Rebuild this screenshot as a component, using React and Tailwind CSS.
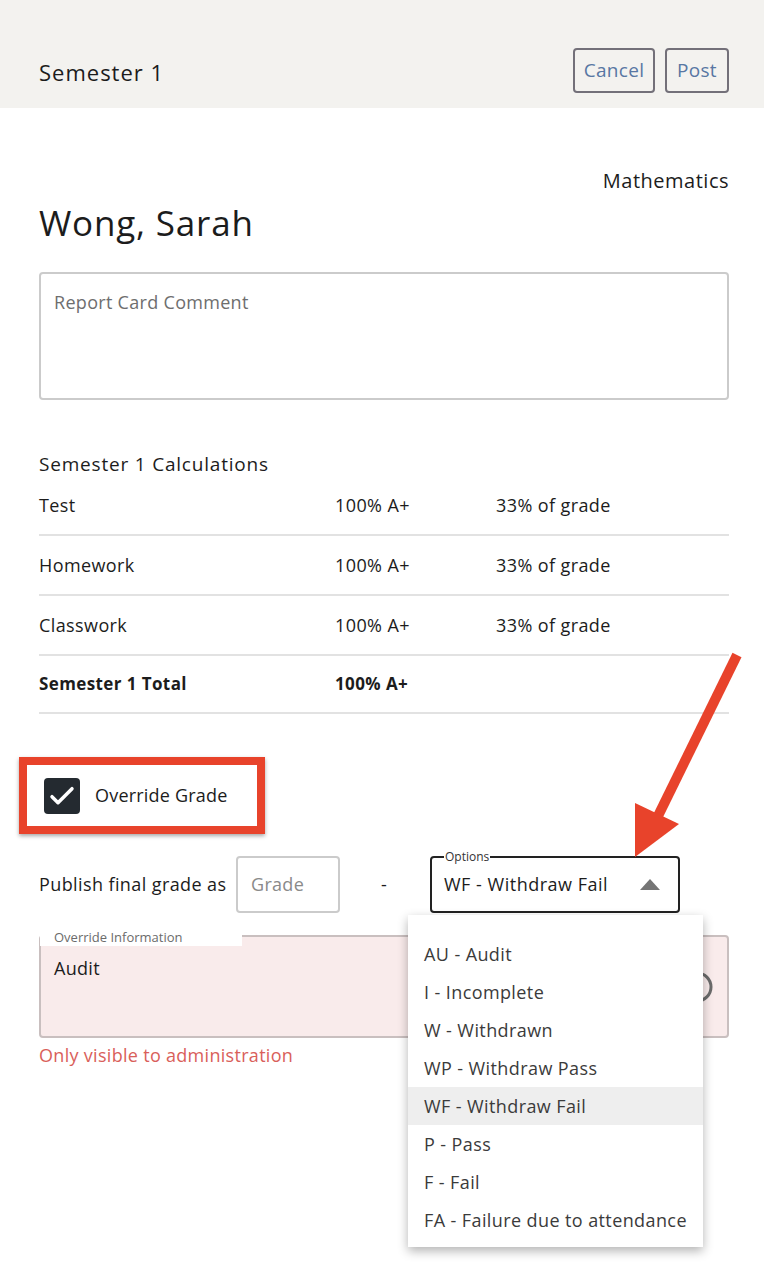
import React from "react";

const font = { fontFamily: "'Open Sans', Lato, sans-serif" };

const rows = [
  { label: "Test", value: "100% A+", pct: "33% of grade" },
  { label: "Homework", value: "100% A+", pct: "33% of grade" },
  { label: "Classwork", value: "100% A+", pct: "33% of grade" },
];

const options = [
  "AU - Audit",
  "I - Incomplete",
  "W - Withdrawn",
  "WP - Withdraw Pass",
  "WF - Withdraw Fail",
  "P - Pass",
  "F - Fail",
  "FA - Failure due to attendance",
];

export default function App() {
  return (
    <div className="relative w-[764px] min-h-[1282px] bg-white text-[#1c1c1c]" style={font}>
      {/* Header */}
      <div className="flex h-[108px] items-start justify-between bg-[#f3f2ef] pl-[39px] pr-[35px] pt-[48px]">
        <div className="mt-[8px] text-[22px] leading-[32px] tracking-[1px] text-[#1c1c1c]">Semester 1</div>
        <div className="flex gap-[10px]">
          <button className="h-[45px] w-[82px] rounded-[4px] border-2 border-[#737079] text-[19px] tracking-[0.3px] text-[#5877a3]">Cancel</button>
          <button className="h-[45px] w-[64px] rounded-[4px] border-2 border-[#737079] text-[19px] tracking-[0.3px] text-[#5877a3]">Post</button>
        </div>
      </div>

      <div className="pl-[39px] pr-[35px]">
        <div className="mt-[61px] text-right text-[20px] leading-[24px] tracking-[0.5px]">Mathematics</div>
        <div className="mt-[10px] text-[35px] leading-[40px] tracking-[0.8px]">Wong, Sarah</div>
        <div className="mt-[29px] h-[128px] rounded-[4px] border-2 border-[#cbcbcb] px-[13px] pt-[16px] text-[18px] leading-[24px] tracking-[0.3px] text-[#6e6e6e]">
          Report Card Comment
        </div>

        <div className="mt-[52px] text-[19px] leading-[24px] tracking-[0.8px]">Semester 1 Calculations</div>
        <div>
          {rows.map((r) => (
            <div key={r.label} className="flex h-[60px] items-center border-b-2 border-[#e2e2e2] text-[18px] tracking-[0.4px]">
              <div className="w-[296px]">{r.label}</div>
              <div className="w-[161px]">{r.value}</div>
              <div>{r.pct}</div>
            </div>
          ))}
          <div className="flex h-[58px] items-center border-b-2 border-[#e2e2e2] text-[17px] font-bold tracking-[0.4px]">
            <div className="w-[296px]">Semester 1 Total</div>
            <div className="w-[161px]">100% A+</div>
          </div>
        </div>

        {/* Override checkbox with red annotation box */}
        <div className="-ml-[20px] mt-[43px] flex h-[77px] w-[246px] items-center gap-[15px] border-[8px] border-[#e8432b] pl-[17px] shadow-[0_2px_4px_rgba(0,0,0,0.35)]">
          <div className="flex h-[36px] w-[36px] items-center justify-center rounded-[4px] bg-[#242a30]">
            <svg width="32" height="32" viewBox="0 0 24 24" fill="none" stroke="white" strokeWidth="2.6" strokeLinecap="round" strokeLinejoin="round">
              <path d="M4.5 12.5l4.5 4.5L19.5 6.5" />
            </svg>
          </div>
          <div className="text-[18px] tracking-[0.2px]">Override Grade</div>
        </div>

        {/* Publish row */}
        <div className="mt-[22px] flex h-[57px] items-center">
          <div className="w-[197px] text-[18px] tracking-[0.4px]">Publish final grade as</div>
          <div className="flex h-[57px] w-[104px] items-center rounded-[4px] border-2 border-[#cbcbcb] pl-[13px] text-[18px] tracking-[0.3px] text-[#8a8a8a]">Grade</div>
          <div className="ml-[41px] w-[49px] text-[18px]">-</div>
          <div className="relative h-[57px] w-[250px] rounded-[4px] border-2 border-[#222222]">
            <span className="absolute -top-[9px] left-[12px] bg-white px-[1px] text-[12px] leading-[16px] text-[#333]">Options</span>
            <div className="flex h-full items-center justify-between pl-[12px] pr-[18px]">
              <span className="text-[18px] tracking-[0.5px]">WF - Withdraw Fail</span>
              <svg width="20" height="11" viewBox="0 0 20 11"><path d="M0 11 L10 0 L20 11 Z" fill="#757575" /></svg>
            </div>
            {/* Dropdown menu */}
            <div className="absolute left-[-24px] top-[57px] z-20 w-[295px] bg-white pb-[8px] pt-[20px] shadow-[0_4px_10px_rgba(0,0,0,0.3)]">
              {options.map((o) => (
                <div key={o} className={`flex h-[38px] items-center pl-[16px] text-[18px] tracking-[0.4px] text-[#3b3b3b] ${o === "WF - Withdraw Fail" ? "bg-[#eeeeee]" : ""}`}>
                  {o}
                </div>
              ))}
            </div>
          </div>
        </div>

        {/* Override information */}
        <div className="relative mt-[22px] h-[103px] rounded-[4px] border-2 border-[#c9bfbf] bg-[#f9ebeb] px-[13px] pt-[18px]">
          <span className="absolute -left-[1px] -top-[9px] h-[18px] w-[202px] bg-white pl-[14px] text-[13px] leading-[18px] text-[#6b6b6b]">Override Information</span>
          <div className="text-[18px] tracking-[0.3px]">Audit</div>
          <svg className="absolute right-[14px] top-[34px]" width="32" height="32" viewBox="0 0 32 32">
            <circle cx="16" cy="16" r="14" fill="none" stroke="#6b6b6b" strokeWidth="3" />
          </svg>
        </div>
        <div className="mt-[4px] text-[18px] tracking-[0.3px] text-[#d9605a]">Only visible to administration</div>
      </div>

      {/* Red arrow annotation */}
      <svg className="pointer-events-none absolute left-[620px] top-[640px] z-30" width="140" height="230" viewBox="0 0 140 230">
        <line x1="117" y1="15" x2="38" y2="176" stroke="#e8432b" strokeWidth="10" />
        <path d="M15 217 L15 163 L59 184 Z" fill="#e8432b" />
      </svg>
    </div>
  );
}
